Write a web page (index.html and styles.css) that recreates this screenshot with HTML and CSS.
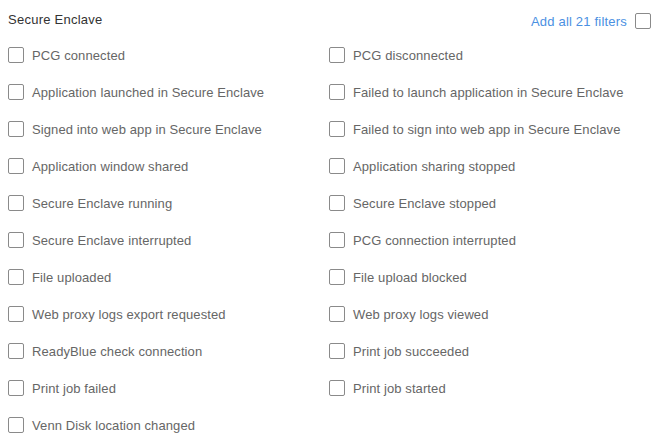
FILE: index.html
```html
<!DOCTYPE html>
<html>
<head>
<meta charset="utf-8">
<link rel="stylesheet" href="styles.css">
</head>
<body>
<div class="panel">
  <div class="header">
    <span class="title">Secure Enclave</span>
    <label class="add-all"><span class="link">Add all 21 filters</span><span class="box"></span></label>
  </div>
  <div class="grid">
    <label class="item"><span class="box"></span><span class="text">PCG connected</span></label>
    <label class="item"><span class="box"></span><span class="text">PCG disconnected</span></label>
    <label class="item"><span class="box"></span><span class="text">Application launched in Secure Enclave</span></label>
    <label class="item"><span class="box"></span><span class="text">Failed to launch application in Secure Enclave</span></label>
    <label class="item"><span class="box"></span><span class="text">Signed into web app in Secure Enclave</span></label>
    <label class="item"><span class="box"></span><span class="text">Failed to sign into web app in Secure Enclave</span></label>
    <label class="item"><span class="box"></span><span class="text">Application window shared</span></label>
    <label class="item"><span class="box"></span><span class="text">Application sharing stopped</span></label>
    <label class="item"><span class="box"></span><span class="text">Secure Enclave running</span></label>
    <label class="item"><span class="box"></span><span class="text">Secure Enclave stopped</span></label>
    <label class="item"><span class="box"></span><span class="text">Secure Enclave interrupted</span></label>
    <label class="item"><span class="box"></span><span class="text">PCG connection interrupted</span></label>
    <label class="item"><span class="box"></span><span class="text">File uploaded</span></label>
    <label class="item"><span class="box"></span><span class="text">File upload blocked</span></label>
    <label class="item"><span class="box"></span><span class="text">Web proxy logs export requested</span></label>
    <label class="item"><span class="box"></span><span class="text">Web proxy logs viewed</span></label>
    <label class="item"><span class="box"></span><span class="text">ReadyBlue check connection</span></label>
    <label class="item"><span class="box"></span><span class="text">Print job succeeded</span></label>
    <label class="item"><span class="box"></span><span class="text">Print job failed</span></label>
    <label class="item"><span class="box"></span><span class="text">Print job started</span></label>
    <label class="item"><span class="box"></span><span class="text">Venn Disk location changed</span></label>
  </div>
</div>
</body>
</html>
```
FILE: styles.css
```css
html, body {
  margin: 0;
  padding: 0;
  background: #ffffff;
}
body {
  font-family: "Liberation Sans", Arial, sans-serif;
  font-size: 13px;
  letter-spacing: 0.1px;
  color: #666666;
}
.panel {
  padding: 0 16px 0 8px;
}
.header {
  display: flex;
  justify-content: space-between;
  align-items: center;
  height: 16px;
  margin-top: 13px;
}
.title {
  color: #333333;
  letter-spacing: 0.25px;
  position: relative;
  top: -2px;
}
.add-all {
  display: flex;
  align-items: center;
  gap: 8px;
}
.link {
  color: #4a90e2;
  letter-spacing: 0.2px;
}
.grid {
  display: grid;
  grid-template-columns: 321px 1fr;
  grid-auto-rows: 37px;
  margin-top: 18px;
}
.item {
  display: flex;
  align-items: center;
  gap: 8px;
  height: 16px;
}
.box {
  display: inline-block;
  width: 16px;
  height: 16px;
  box-sizing: border-box;
  border: 1px solid #8a8a8a;
  border-radius: 2px;
  background: #fff;
  flex: none;
}
.text {
  color: #666666;
  white-space: nowrap;
}
```
